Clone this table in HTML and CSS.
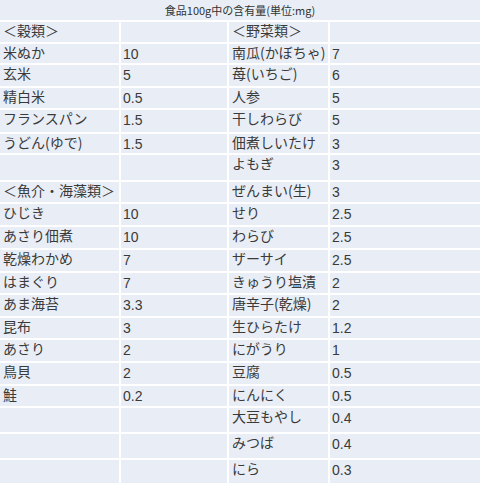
FILE: index.html
```html
<!DOCTYPE html>
<html lang="ja">
<head>
<meta charset="utf-8">
<title>食品100g中の含有量</title>
<link rel="stylesheet" href="styles.css">
</head>
<body>
<div class="sheet">
  <div class="cap">食品100g中の含有量(単位:mg)</div>

  <div class="c n">＜穀類＞</div><div class="c v"></div><div class="c n">＜野菜類＞</div><div class="c v"></div>
  <div class="c n">米ぬか</div><div class="c v">10</div><div class="c n">南瓜(かぼちゃ)</div><div class="c v">7</div>
  <div class="c n">玄米</div><div class="c v">5</div><div class="c n">苺(いちご)</div><div class="c v">6</div>
  <div class="c n">精白米</div><div class="c v">0.5</div><div class="c n">人参</div><div class="c v">5</div>
  <div class="c n">フランスパン</div><div class="c v">1.5</div><div class="c n">干しわらび</div><div class="c v">5</div>
  <div class="c n">うどん(ゆで)</div><div class="c v">1.5</div><div class="c n">佃煮しいたけ</div><div class="c v">3</div>
  <div class="c n"></div><div class="c v"></div><div class="c n">よもぎ</div><div class="c v">3</div>
  <div class="c n">＜魚介・海藻類＞</div><div class="c v"></div><div class="c n">ぜんまい(生)</div><div class="c v">3</div>
  <div class="c n">ひじき</div><div class="c v">10</div><div class="c n">せり</div><div class="c v">2.5</div>
  <div class="c n">あさり佃煮</div><div class="c v">10</div><div class="c n">わらび</div><div class="c v">2.5</div>
  <div class="c n">乾燥わかめ</div><div class="c v">7</div><div class="c n">ザーサイ</div><div class="c v">2.5</div>
  <div class="c n">はまぐり</div><div class="c v">7</div><div class="c n">きゅうり塩漬</div><div class="c v">2</div>
  <div class="c n">あま海苔</div><div class="c v">3.3</div><div class="c n">唐辛子(乾燥)</div><div class="c v">2</div>
  <div class="c n">昆布</div><div class="c v">3</div><div class="c n">生ひらたけ</div><div class="c v">1.2</div>
  <div class="c n">あさり</div><div class="c v">2</div><div class="c n">にがうり</div><div class="c v">1</div>
  <div class="c n">鳥貝</div><div class="c v">2</div><div class="c n">豆腐</div><div class="c v">0.5</div>
  <div class="c n">鮭</div><div class="c v">0.2</div><div class="c n">にんにく</div><div class="c v">0.5</div>
  <div class="c n"></div><div class="c v"></div><div class="c n">大豆もやし</div><div class="c v">0.4</div>
  <div class="c n"></div><div class="c v"></div><div class="c n">みつば</div><div class="c v">0.4</div>
  <div class="c n"></div><div class="c v"></div><div class="c n">にら</div><div class="c v">0.3</div>
</div>
</body>
</html>
```

FILE: styles.css
```css
html, body {
  margin: 0;
  padding: 0;
  background: #ffffff;
}

.sheet {
  display: grid;
  width: 480px;
  grid-template-columns: 119px 106px 99px 150px;
  grid-template-rows: 20px 20px 19px 21px 20px 22px 19px 25px 20px 21px 21px 21px 20px 21px 20px 21px 21px 20px 24px 24px 23px;
  gap: 2px;
  background: #ffffff;
  font-family: "Noto Sans CJK JP", "Noto Sans", sans-serif;
  color: #3a3a3a;
}

.cap {
  grid-column: 1 / -1;
  background: #e9eef6;
  text-align: center;
  font-size: 11px;
  line-height: 18px;
  padding-top: 1px;
  color: #333333;
}

.c {
  background: #e9eef6;
  white-space: nowrap;
}

.n {
  font-size: 14px;
  line-height: 16px;
  padding: 0 0 0 3px;
}

.v {
  font-family: "Liberation Sans", Arial, sans-serif;
  font-size: 14px;
  line-height: 15px;
  padding: 3px 0 0 2px;
}
```
